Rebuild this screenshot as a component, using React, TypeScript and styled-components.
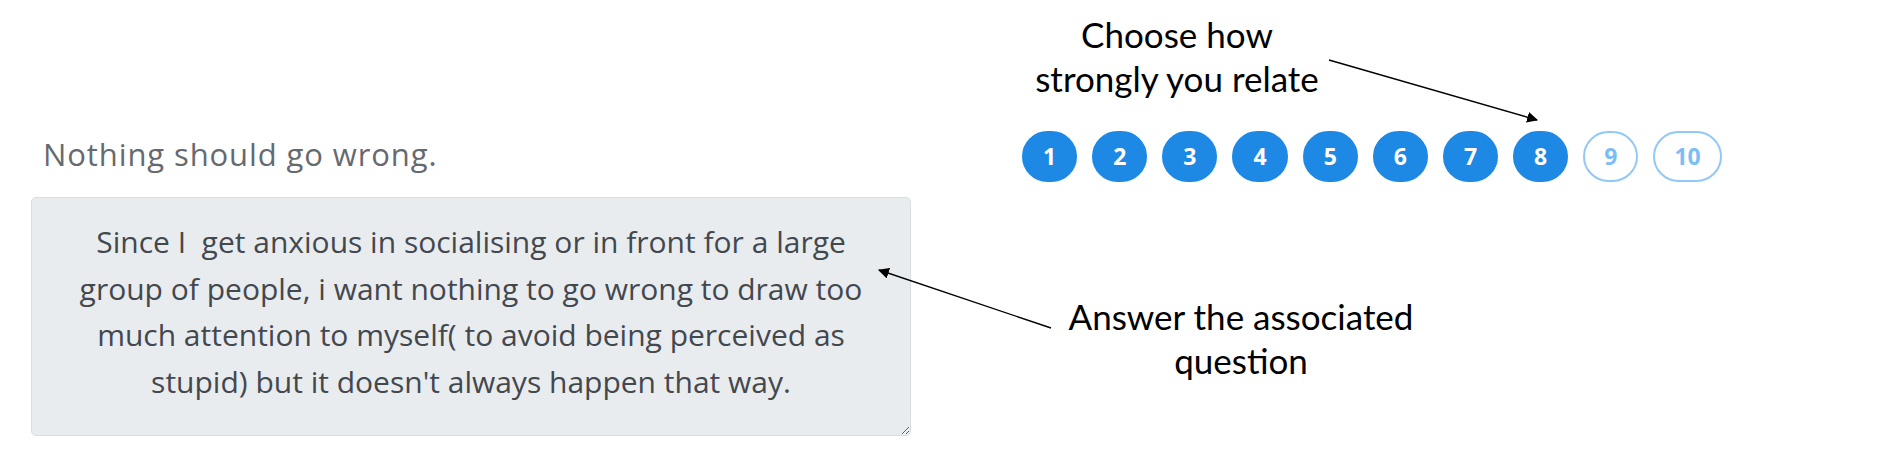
import React from "react";
import styled, { createGlobalStyle } from "styled-components";

const GlobalStyle = createGlobalStyle`
  html, body { margin: 0; padding: 0; background: #ffffff; }
  body { font-family: "Open Sans", "Liberation Sans", sans-serif; }
`;

const Page = styled.div`
  position: relative;
  width: 1881px;
  height: 453px;
  display: flex;
  align-items: flex-start;
  overflow: hidden;
`;

const LeftColumn = styled.div`
  display: flex;
  flex-direction: column;
  margin-left: 31px;
  padding-top: 137px;
  width: 880px;
`;

const QuestionLabel = styled.div`
  font-family: "Open Sans", sans-serif;
  font-size: 31px;
  letter-spacing: 0.9px;
  line-height: 34px;
  color: #656a70;
  padding-left: 12px;
  margin-bottom: 26px;
`;

const AnswerBox = styled.textarea`
  box-sizing: border-box;
  width: 880px;
  height: 239px;
  padding: 21px 40px 27px;
  font-family: "Open Sans", sans-serif;
  font-size: 30px;
  line-height: 46.7px;
  text-align: center;
  color: #43484e;
  background: #e9ecef;
  border: 1px solid #d6dee6;
  border-radius: 5px;
  resize: vertical;
  overflow: hidden;
  outline: none;
`;

const RightColumn = styled.div`
  display: flex;
  flex-direction: column;
  margin-left: 111px;
  padding-top: 12px;
`;

const Note = styled.div<{ $offset: number; $width: number }>`
  font-family: Lato, "Open Sans", sans-serif;
  font-size: 35px;
  line-height: 44px;
  color: #000000;
  text-align: center;
  width: ${(p) => p.$width}px;
  margin-left: ${(p) => p.$offset}px;
`;

const Scale = styled.div`
  display: flex;
  gap: 15px;
  margin-top: 31px;
  margin-bottom: 112px;
`;

const ScaleButton = styled.button<{ $active: boolean }>`
  box-sizing: border-box;
  min-width: 55px;
  height: 51px;
  padding: 0 19px;
  border-radius: 26px;
  display: flex;
  align-items: center;
  justify-content: center;
  font-family: "Open Sans", sans-serif;
  font-weight: 700;
  font-size: 23px;
  line-height: 1;
  cursor: pointer;
  background: ${(p) => (p.$active ? "#1e88e5" : "#ffffff")};
  color: ${(p) => (p.$active ? "#ffffff" : "#7dbdf5")};
  border: 2px solid ${(p) => (p.$active ? "#1e88e5" : "#90c8f8")};
`;

const ArrowLayer = styled.svg`
  position: absolute;
  left: 0;
  top: 0;
  pointer-events: none;
`;

const values = [1, 2, 3, 4, 5, 6, 7, 8, 9, 10];
const selected = 8;

export default function App() {
  return (
    <>
      <GlobalStyle />
      <Page>
        <LeftColumn>
          <QuestionLabel>Nothing should go wrong.</QuestionLabel>
          <AnswerBox
            readOnly
            defaultValue={
              "Since I  get anxious in socialising or in front for a large group of people, i want nothing to go wrong to draw too much attention to myself( to avoid being perceived as stupid) but it doesn't always happen that way."
            }
          />
        </LeftColumn>
        <RightColumn>
          <Note $offset={0} $width={310}>
            Choose how
            <br />
            strongly you relate
          </Note>
          <Scale>
            {values.map((v) => (
              <ScaleButton key={v} $active={v <= selected}>
                {v}
              </ScaleButton>
            ))}
          </Scale>
          <Note $offset={19} $width={400}>
            Answer the associated
            <br />
            question
          </Note>
        </RightColumn>
        <ArrowLayer width={1881} height={453} viewBox="0 0 1881 453">
          <defs>
            <marker
              id="head"
              viewBox="0 0 10 10"
              refX="9"
              refY="5"
              markerWidth="11"
              markerHeight="11"
              markerUnits="userSpaceOnUse"
              orient="auto"
            >
              <path d="M0 0 L10 5 L0 10 Z" fill="#000" />
            </marker>
          </defs>
          <line x1={1329} y1={60} x2={1537} y2={120} stroke="#000" strokeWidth={1.4} markerEnd="url(#head)" />
          <line x1={1051} y1={328} x2={879} y2={270} stroke="#000" strokeWidth={1.4} markerEnd="url(#head)" />
        </ArrowLayer>
      </Page>
    </>
  );
}
